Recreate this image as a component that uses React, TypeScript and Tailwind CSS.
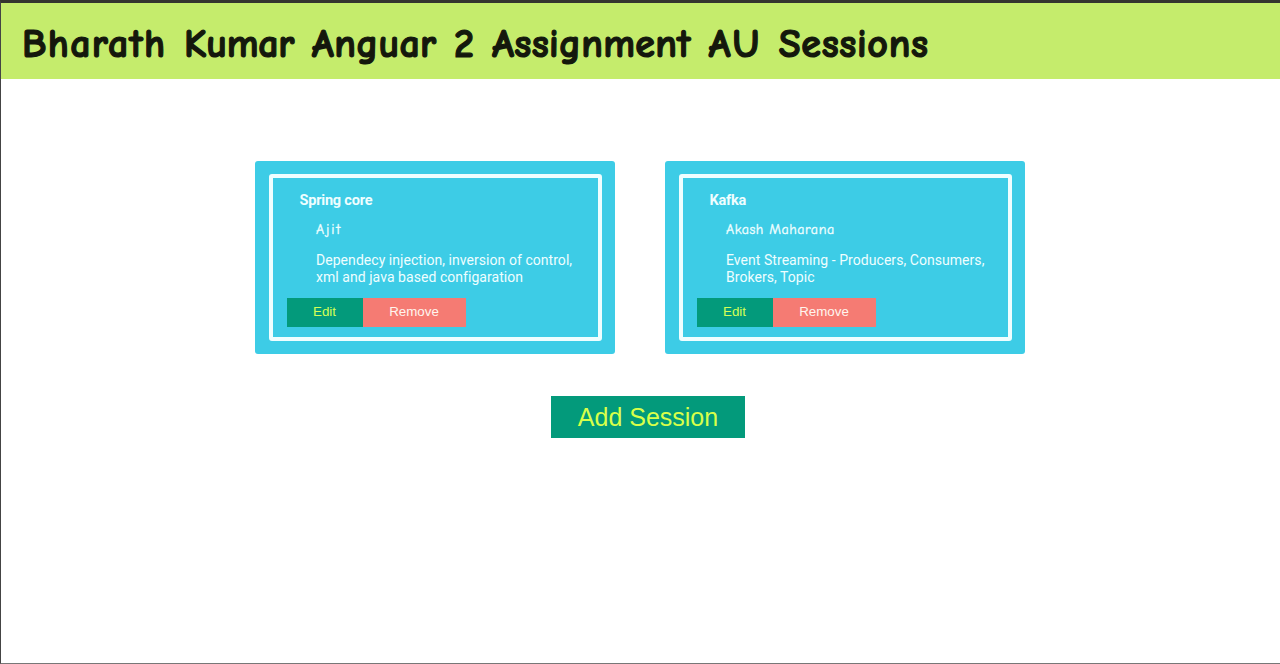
const sessions = [
  { title: "Spring core", host: "Ajit", hostTracking: "tracking-[1.9px]", lines: ["Dependecy injection, inversion of control,", "xml and java based configaration"] },
  { title: "Kafka", host: "Akash Maharana", hostTracking: "tracking-[0.55px]", lines: ["Event Streaming - Producers, Consumers,", "Brokers, Topic"] },
];

export default function App() {
  return (
    <div className="flex h-[664px] w-[1280px] flex-col overflow-hidden border-t-[3px] border-b border-l border-t-[#35352f] border-b-[#777] border-l-[#444] bg-white font-['Roboto',sans-serif]">
      <header className="flex h-[76px] shrink-0 items-center bg-[#c5ec6c] pt-[5px] pl-[21px] text-[#14180c]">
        <h1 className="font-['Comic_Neue','Comic_Sans_MS',cursive] text-[40px] font-bold tracking-[0.3px] whitespace-nowrap [word-spacing:3.1px] [-webkit-text-stroke:1.2px_#14180c]"><span className="tracking-[1.3px]">Bharath</span> <span className="tracking-[-0.3px]">Kumar</span> Anguar 2 Assignment <span className="tracking-[2px]">AU</span> <span className="tracking-[0.65px]">Sessions</span></h1>
      </header>
      <main className="flex flex-col pt-[82px]">
        <div className="flex gap-[50px] pl-[254px]">
          {sessions.map((s) => (
            <article key={s.title} className="h-[193px] w-[360px] rounded-[3px] bg-[#3dcce6] py-[13px] pr-[13px] pl-[14px] text-[#effeff]">
              <div className="h-[167px] w-[333px] rounded-[3px] border-4 border-[#effeff] pt-[14px] pl-[14px]">
                <h2 className="pl-[12.5px] text-[14.5px] leading-[18px] font-bold tracking-[-0.2px]">{s.title}</h2>
                <p className={`mt-[10px] pl-[29px] font-['Comic_Neue','Comic_Sans_MS',cursive] text-[14px] leading-[20px] [-webkit-text-stroke:0.35px_#effeff] ${s.hostTracking}`}>{s.host}</p>
                <div className="mt-[12px] pl-[29px] text-[14px] leading-[16.5px] tracking-[0.05px] whitespace-nowrap">
                  {s.lines.map((t) => <p key={t}>{t}</p>)}
                </div>
                <div className="mt-[13px] flex font-['Liberation_Sans',sans-serif] text-[13.33px]">
                  <button className="h-[29px] w-[76px] bg-[#039a7b] pr-px pb-px text-[#d4ff55]">Edit</button>
                  <button className="h-[29px] w-[103px] bg-[#f57b73] pr-px pb-px text-[#fff5ee]">Remove</button>
                </div>
              </div>
            </article>
          ))}
        </div>
        <button className="mt-[42px] ml-[550px] h-[42px] w-[194px] bg-[#039a7b] pt-px font-['Liberation_Sans',sans-serif] text-[25px] text-[#d8ff4a]">Add Session</button>
      </main>
    </div>
  );
}
